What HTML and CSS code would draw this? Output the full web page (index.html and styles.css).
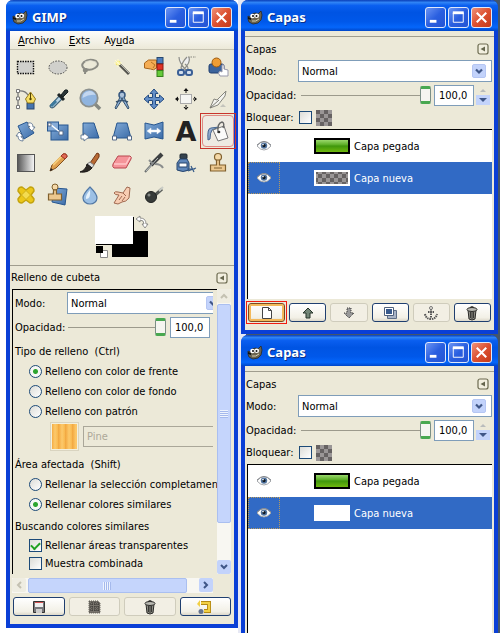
FILE: index.html
```
<!DOCTYPE html>
<html lang="es">
<head>
    <meta charset="UTF-8">
    <meta name="viewport" content="width=device-width, initial-scale=1.0">
    <title>GIMP</title>
    <link rel="stylesheet" href="styles.css">
</head>
<body>
    <!-- shared shapes -->
    <svg class="sprite" aria-hidden="true">
        <defs>
            <linearGradient id="blue" x1="0" y1="0" x2="1" y2="1">
                <stop offset="0" stop-color="#82abd8"/>
                <stop offset="1" stop-color="#3c6ca8"/>
            </linearGradient>
            <linearGradient id="bw" x1="0" x2="1">
                <stop offset="0" stop-color="#555"/>
                <stop offset="1" stop-color="#fafafa"/>
            </linearGradient>
            <linearGradient id="green" x1="0" x2="0" y1="0" y2="1">
                <stop offset="0" stop-color="#9ad86c"/>
                <stop offset=".4" stop-color="#5cae26"/>
                <stop offset=".5" stop-color="#3f960c"/>
                <stop offset="1" stop-color="#6fb80e"/>
            </linearGradient>
            <pattern id="checks" width="8" height="8" patternUnits="userSpaceOnUse">
                <rect width="8" height="8" fill="#9a9696"/>
                <path d="M0 0h4v4h-4zM4 4h4v4h-4z" fill="#666262"/>
            </pattern>
        </defs>
        <symbol id="wilber" viewBox="0 0 16 16">
            <path d="M1 7l2 1 2-3 4-1 2 1 3-3 1 4-1 5-3 3-5 1-4-2-1-3z" fill="#6b6450" stroke="#2b2a20" stroke-width=".8"/>
            <circle cx="5.500" cy="7" r="2.300" fill="#fff"/>
            <circle cx="9.800" cy="6.800" r="2.300" fill="#fff"/>
            <circle cx="6" cy="7" r="1" fill="#111"/>
            <circle cx="9.500" cy="7" r="1" fill="#111"/>
            <path d="M1 8l3 1v2l-3-1z" fill="#111"/>
            <path d="M5 12q4 1 7-2" stroke="#d5cfae" fill="none"/>
        </symbol>
        <symbol id="eye" viewBox="0 0 16 12">
            <path d="M1 6q7-9 14 0q-7 8-14 0z" fill="#fff" stroke="#a4a7ab"/>
            <circle cx="8" cy="5.600" r="3.200" fill="#51749f"/>
            <circle cx="8" cy="5.600" r="1.600" fill="#101820"/>
            <path d="M1 5q7-7 14 0" fill="none" stroke="#85888d"/>
            <circle cx="7" cy="4.600" r=".8" fill="#fff"/>
        </symbol>
        <symbol id="chevron" viewBox="0 0 14 14">
            <rect x=".5" y=".5" width="13" height="13" rx="1.500" fill="#c3d3fb" stroke="#b5c6f3"/>
            <path d="M4 5.500l3 3 3-3" fill="none" stroke="#3f5687" stroke-width="2.200"/>
        </symbol>
        <symbol id="detach" viewBox="0 0 12 12">
            <rect x="1" y="1" width="10" height="10" rx="2" fill="#f2efdf" stroke="#6c6b50" stroke-width="1.200"/>
            <path d="M8 3.500v5l-4.500-2.500z" fill="#66664e"/>
        </symbol>
        <symbol id="trash" viewBox="0 0 16 16">
            <path d="M4 5l1 9q3 2 6 0l1-9z" fill="#8d8d85" stroke="#2b2b28"/>
            <path d="M6.500 7v6M8 7v7M9.500 7v6" stroke="#3a3a37"/>
            <ellipse cx="8" cy="4.500" rx="5" ry="2" fill="#b9b9b2" stroke="#2b2b28"/>
            <path d="M6 2.500q2-2 4 0" fill="none" stroke="#2b2b28"/>
        </symbol>
    </svg>

    <main class="desktop">
        <section class="window toolbox">
            <header class="titlebar">
                <svg class="app-icon"><use href="#wilber"/></svg>
                <h1>GIMP</h1>
                <button class="win-btn" aria-label="Minimizar"><svg viewBox="0 0 20 20"><path d="M4 14h7" stroke="#fff" stroke-width="3"/></svg></button>
                <button class="win-btn" aria-label="Maximizar"><svg viewBox="0 0 20 20"><path d="M4.500 5v10h10.500v-10z" stroke="#fff" fill="none"/><path d="M4 5h11.500" stroke="#fff" stroke-width="3"/></svg></button>
                <button class="win-btn close" aria-label="Cerrar"><svg viewBox="0 0 20 20"><path d="M5 5l10 10M15 5l-10 10" stroke="#fff" stroke-width="2.200"/></svg></button>
            </header>
            <nav class="menubar">
                <a href="#"><u>A</u>rchivo</a>
                <a href="#"><u>E</u>xts</a>
                <a href="#">Ay<u>u</u>da</a>
            </nav>

            <div class="tools">
                <button class="tool" aria-label="Rectángulo"><svg viewBox="0 0 24 24"><rect x="3.500" y="6.500" width="16" height="12" fill="#d0d0cc" stroke="#111" stroke-width="1.400" stroke-dasharray="1.500 1"/></svg></button>
                <button class="tool" aria-label="Elipse"><svg viewBox="0 0 24 24"><ellipse cx="12" cy="12.500" rx="9" ry="6.500" fill="#d0d0cc" stroke="#444" stroke-dasharray="1.500 1.300"/></svg></button>
                <button class="tool" aria-label="Lazo"><svg viewBox="0 0 24 24"><path d="M7 14q-5-3-1-7q5-4 12-1q4 4-1 7q-5 3-9 1q-3 0-2 2q3 1 3-1q-2-1-2 4" fill="none" stroke="#8b8b83" stroke-width="2"/><path d="M7 7q5-3 11 0q2 3-2 5" fill="none" stroke="#deddd0" stroke-width=".8"/></svg></button>
                <button class="tool" aria-label="Varita"><svg viewBox="0 0 24 24"><path d="M9 9l10 10" stroke="#55554f" stroke-width="3"/><path d="M9.500 8.500l10 10" stroke="#b4b4ab" stroke-width="1"/><circle cx="8" cy="8" r="2.500" fill="#f5e86b"/><path d="M8 4v8M4 8h8M5 5l5 5" stroke="#fffbd0"/></svg></button>
                <button class="tool" aria-label="Por color"><svg viewBox="0 0 24 24"><path d="M2.500 8l4-3h8v8q-3 3-6 1l-6-1z" fill="#f4ad55" stroke="#a8651c"/><path d="M9 7l4 3-2 3" fill="none" stroke="#b87425"/><rect x="15" y="2.500" width="6" height="6" fill="#4d7dbd" stroke="#27486f"/><rect x="15" y="9" width="6" height="6" fill="#df3226" stroke="#8e1b12"/><rect x="15" y="15.500" width="6" height="6" fill="#65ca39" stroke="#34801a"/></svg></button>
                <button class="tool" aria-label="Tijeras"><svg viewBox="0 0 24 24"><path d="M5 2q0 6 7 13l2-1q0-3-3-5M15 2q2 6-6 13l-2-2q1-6 6-11" fill="#eee" stroke="#8d8d88" stroke-width="1.200"/><path d="M14 2h8" stroke="#86867d" stroke-dasharray="1.500 1"/><rect x="4" y="15" width="6" height="5" rx="2" fill="#d3deeb" stroke="#3a5f96" stroke-width="2"/><rect x="12" y="15" width="6" height="5" rx="2" fill="#d3deeb" stroke="#3a5f96" stroke-width="2"/></svg></button>
                <button class="tool" aria-label="Primer plano"><svg viewBox="0 0 24 24"><rect x="3" y="9" width="15" height="9" rx="2" fill="#3c649c" stroke="#203f70"/><circle cx="10.500" cy="7.500" r="4.500" fill="#ee9d35" stroke="#9d5b10"/><path d="M14 21q-3-3 0-5l2 1v-7q2-1 2 1v3l4 1v6z" fill="#fff" stroke="#99a"/></svg></button>

                <button class="tool" aria-label="Rutas"><svg viewBox="0 0 24 24"><path d="M4 4v16M4 4q7-1 10 4" stroke="#777" fill="none" stroke-width="1.300"/><path d="M2.500 2.500h3v3h-3zM2.500 10h3v3h-3zM2.500 18.500h3v3h-3z" fill="#fff" stroke="#777"/><rect x="13" y="16" width="7" height="6" fill="#4674af" stroke="#28466f"/><path d="M16.500 5l5 7-2 4h-6l-2-4z" fill="#f8df65" stroke="#92771c"/><path d="M16.500 6v7" stroke="#554400"/><circle cx="16.500" cy="12" r="1.200" fill="#554400"/></svg></button>
                <button class="tool" aria-label="Recoge-color"><svg viewBox="0 0 24 24"><path d="M14 8l3 3-9 9q-3 2-4-1z" fill="#b4d3e5" stroke="#44667b" stroke-width="1.200"/><path d="M5 19l5-5" stroke="#3c799d" stroke-width="3"/><path d="M12 7l6 6" stroke="#1d2425" stroke-width="3"/><path d="M15 8l4-5q3-1 3 2l-5 5z" fill="#2b3637" stroke="#172022"/></svg></button>
                <button class="tool" aria-label="Ampliación"><svg viewBox="0 0 24 24"><path d="M17 17l5 5" stroke="#858982" stroke-width="3.500"/><circle cx="11" cy="11" r="8.700" fill="#8fb4df" stroke="#8c918f" stroke-width="1.800"/><path d="M4.500 11q0-6 7-7q4 0 6 4q-6-1-13 3z" fill="#c3d7ef"/></svg></button>
                <button class="tool" aria-label="Medir"><svg viewBox="0 0 24 24"><path d="M12 3v4" stroke="#334" stroke-width="3"/><circle cx="12" cy="8" r="3" fill="#adc2da" stroke="#36577f" stroke-width="1.500"/><path d="M10 10l-5 11 1 1 7-11M14 10l5 11-1 1-7-11" fill="#8baed4" stroke="#38536f"/><path d="M6 15q6-3 12 0" fill="none" stroke="#38536f" stroke-width="1.500"/></svg></button>
                <button class="tool" aria-label="Mover"><svg viewBox="0 0 24 24"><path d="M12 2l4 4.500h-2.500v4h4V8l4.500 4-4.500 4v-2.500h-4v4H16l-4 4.500-4-4.500h2.500v-4h-4V16L2 12l4.500-4v2.500h4v-4H8z" fill="#648fc8" stroke="#234a80"/></svg></button>
                <button class="tool" aria-label="Alinear"><svg viewBox="0 0 24 24"><rect x="6.500" y="7.500" width="11" height="9" fill="#f5f5f2" stroke="#aaa"/><path d="M12 1l2.500 3h-5zM12 23l2.500-3h-5zM1 12l3-2.500v5zM23 12l-3-2.500v5zM11.500 3h1v3h-1zM11.500 18h1v3h-1zM3 11.500h2v1h-2zM19 11.500h2v1h-2z" fill="#111"/></svg></button>
                <button class="tool" aria-label="Recortar"><svg viewBox="0 0 24 24"><path d="M4 21l4-9 3 1 9-9-1 5-7 9z" fill="#f4f4f0" stroke="#85857d"/><path d="M4 21l9-8" stroke="#77776f"/><path d="M14 20h6l-3-3z" fill="#c4c4bc"/></svg></button>

                <button class="tool" aria-label="Rotar"><svg viewBox="0 0 24 24"><path d="M4 7l9-4 7 11-10 6z" fill="url(#blue)" stroke="#27568f"/><path d="M14 4q5-1 5 4h2l-3 4-4-4h2q0-1-2-1zM9 22q-5 0-5-5H2l3-4 4 4H7q0 2 2 2z" fill="#fff" stroke="#526989" stroke-width=".8"/></svg></button>
                <button class="tool" aria-label="Escalar"><svg viewBox="0 0 24 24"><rect x="5" y="6" width="17" height="15" fill="url(#blue)" stroke="#27568f"/><rect x="1.500" y="3" width="11" height="9" fill="#86abd7" stroke="#27568f"/><path d="M4 5l11 9" stroke="#fff" stroke-width="1.500"/><path d="M2 4h3v3h-3zM13 12h4v4h-4z" fill="#fff" stroke="#526989"/></svg></button>
                <button class="tool" aria-label="Inclinar"><svg viewBox="0 0 24 24"><path d="M5 4h11l5 15H5z" fill="url(#blue)" stroke="#27568f"/><path d="M3 16h3v-2l5 4-5 4v-2H3z" fill="#fff" stroke="#526989" stroke-width=".8"/></svg></button>
                <button class="tool" aria-label="Perspectiva"><svg viewBox="0 0 24 24"><path d="M7 4h10l4 15H3z" fill="url(#blue)" stroke="#27568f"/><path d="M2.500 17h4v4h-4zM17.500 17h4v4h-4z" fill="#fff" stroke="#526989"/></svg></button>
                <button class="tool" aria-label="Voltear"><svg viewBox="0 0 24 24"><path d="M3 4l9 2 9-3v17l-9-2-9 2z" fill="url(#blue)" stroke="#27568f"/><path d="M5 12l4-3v2h6V9l4 3-4 3v-2H9v2z" fill="#fff" stroke="#e8eef6" stroke-width=".5"/></svg></button>
                <button class="tool" aria-label="Texto"><svg viewBox="0 0 24 24"><text x="12" y="22" text-anchor="middle" class="text-tool">A</text></svg></button>
                <button class="tool marked" aria-label="Relleno de cubeta"><svg viewBox="0 0 24 24"><path d="M2 21q-1-12 3-12l8-1-7 3q-2 3-2 9z" fill="#93acd0" stroke="#46658f"/><path d="M7 11l11-4 4 12-10 3z" fill="#fbfbf9" stroke="#777"/><path d="M12 14q-1-10 4-11q3 1 1 6" fill="none" stroke="#666" stroke-width="1.400"/><circle cx="13" cy="13" r="1.300" fill="#333"/></svg></button>

                <button class="tool" aria-label="Mezcla"><svg viewBox="0 0 24 24"><rect x="3.500" y="3.500" width="17" height="17" fill="url(#bw)" stroke="#555"/></svg></button>
                <button class="tool" aria-label="Lápiz"><svg viewBox="0 0 24 24"><path d="M4 20l2-6L17 3q4-1 4 3L10 17z" fill="#dfa04e" stroke="#83511e"/><path d="M7 14l10-10" stroke="#f6cc79" stroke-width="2"/><path d="M17 3q4-1 4 3l-2 2-4-3z" fill="#e06a55" stroke="#9d3428"/><path d="M4 20l1-3 2 2z" fill="#222"/></svg></button>
                <button class="tool" aria-label="Pincel"><svg viewBox="0 0 24 24"><path d="M12 12l7-10q3 0 2 4l-6 9z" fill="#b86a34" stroke="#73391a"/><path d="M9 13l3-2 4 3-2 3z" fill="#ddd" stroke="#777"/><path d="M2 21q6-2 7-8l5 4q-4 5-12 4z" fill="#2d2925" stroke="#191715"/></svg></button>
                <button class="tool" aria-label="Goma"><svg viewBox="0 0 24 24"><path d="M3 13l5-8h12q2 1 1 3l-5 9H4q-2-1-1-4z" fill="#f5949a" stroke="#b9464e"/><path d="M4 13h12l4-7" fill="none" stroke="#ffc6c9" stroke-width="1.500"/></svg></button>
                <button class="tool" aria-label="Aerógrafo"><svg viewBox="0 0 24 24"><path d="M3 21l8-9" stroke="#6c7172" stroke-width="2"/><path d="M9 14L20 3" stroke="#3e4142" stroke-width="4"/><path d="M4 20L16 7" stroke="#b7bcbd"/><path d="M7 9l4 4M13 13q6 0 8 4" fill="none" stroke="#8a8d8d" stroke-width="2"/></svg></button>
                <button class="tool" aria-label="Tinta"><svg viewBox="0 0 24 24"><rect x="6" y="3" width="7" height="5" rx="1" fill="#34424c" stroke="#1e2830"/><path d="M6 8h7l2 4v7q-6 3-12 0v-7z" fill="#5f87ba" stroke="#27456d"/><rect x="5" y="12" width="8" height="4" fill="#fff" stroke="#27456d"/><path d="M14 20l8-3M17 15l3 6M13 18h8" stroke="#335887" stroke-width="1.200"/></svg></button>
                <button class="tool" aria-label="Clonar"><svg viewBox="0 0 24 24"><circle cx="12" cy="6" r="3.500" fill="#f4d8a7" stroke="#80602e" stroke-width="1.200"/><path d="M10.500 9h3v5h6v6h-15v-6h6z" fill="#ecc88f" stroke="#80602e" stroke-width="1.200"/><path d="M8 17h8" stroke="#80602e"/></svg></button>

                <button class="tool" aria-label="Sanear"><svg viewBox="0 0 24 24"><path d="M4 8q0-4 4-4l4 3 4-3q4 0 4 4l-3 4 3 4q0 4-4 4l-4-3-4 3q-4 0-4-4l3-4z" fill="#ecc719" stroke="#c3a30f" stroke-width="1.500" stroke-linejoin="round"/><path d="M7.500 12l4.500-4.500 4.500 4.500-4.500 4.500z" fill="#f4dc50" stroke="#d0b01a"/></svg></button>
                <button class="tool" aria-label="Clonar en perspectiva"><svg viewBox="0 0 24 24"><path d="M8 5l13 1-2 16-13-3z" fill="url(#blue)" stroke="#27568f"/><circle cx="9" cy="4" r="3" fill="#f4d8a7" stroke="#80602e"/><path d="M7.500 7h3v4h5v6h-13v-6h5z" fill="#ecc88f" stroke="#80602e" stroke-width="1.200"/></svg></button>
                <button class="tool" aria-label="Enfocar"><svg viewBox="0 0 24 24"><path d="M12 4q7 7 7 11a7 6 0 0 1-14 0q0-4 7-11z" fill="#9cc0e5" stroke="#5379a5" stroke-width="1.200"/><path d="M12 7q-5 6-4 9q5 0 4-9z" fill="#e5f1fb"/></svg></button>
                <button class="tool" aria-label="Tiznar"><svg viewBox="0 0 24 24"><path d="M4 20l5-8q-4 0-5-2 1-2 4-1l5 1 4-6 3 1-1 10q-3 4-7 4l-4 2z" fill="#f8cdb2" stroke="#a06950"/><path d="M13 10l3 3M9 17l3-4M12 18l3-4" stroke="#a06950"/></svg></button>
                <button class="tool" aria-label="Blanquear"><svg viewBox="0 0 24 24"><path d="M12 13l8-7" stroke="#555955" stroke-width="3"/><path d="M17 8l4-4" stroke="#c9cbc5" stroke-width="2"/><circle cx="9" cy="14" r="5.500" fill="#373b39" stroke="#202221"/><circle cx="7" cy="12" r="1.500" fill="#858985"/></svg></button>
            </div>

            <div class="colors">
                <button class="color-bg" aria-label="Color de fondo"></button>
                <button class="color-fg" aria-label="Color de frente"></button>
                <svg class="swap" viewBox="0 0 14 14"><path d="M1 4l4-3v2q6 0 6 6h2l-3 4-3-4h2q0-4-4-4v2z" fill="#fff" stroke="#777" stroke-width=".8"/></svg>
                <svg class="reset" viewBox="0 0 12 12"><path d="M4.500 4.500h7v7h-7z" fill="#fff" stroke="#888"/><path d="M0 0h7v7h-7z" fill="#000"/></svg>
            </div>

            <div class="dock-head">
                <h2>Relleno de cubeta</h2>
                <button class="detach" aria-label="Menú de pestaña"><svg><use href="#detach"/></svg></button>
            </div>

            <div class="options-area">
                <form class="options">
                    <div class="field-row">
                        <label for="fill-mode">Modo:</label>
                        <div class="combo">
                            <select id="fill-mode"><option>Normal</option></select>
                            <svg><use href="#chevron"/></svg>
                        </div>
                    </div>
                    <div class="field-row">
                        <label for="fill-opacity">Opacidad:</label>
                        <input type="range" id="fill-opacity" min="0" max="100" value="100">
                        <input type="text" class="spin" aria-label="Opacidad" value="100,0">
                    </div>
                    <fieldset>
                        <legend>Tipo de relleno&nbsp; (Ctrl)</legend>
                        <label class="choice"><input type="radio" name="fill" checked>Relleno con color de frente</label>
                        <label class="choice"><input type="radio" name="fill">Relleno con color de fondo</label>
                        <label class="choice"><input type="radio" name="fill">Relleno con patrón</label>
                        <div class="pattern">
                            <button type="button" class="pattern-btn" aria-label="Patrón"></button>
                            <input type="text" class="pattern-name" aria-label="Nombre del patrón" value="Pine" disabled>
                        </div>
                    </fieldset>
                    <fieldset>
                        <legend>Área afectada&nbsp; (Shift)</legend>
                        <label class="choice"><input type="radio" name="area">Rellenar la selección completament</label>
                        <label class="choice"><input type="radio" name="area" checked>Rellenar colores similares</label>
                    </fieldset>
                    <fieldset class="similar">
                        <legend>Buscando colores similares</legend>
                        <label class="choice"><input type="checkbox" checked>Rellenar áreas transparentes</label>
                        <label class="choice"><input type="checkbox">Muestra combinada</label>
                    </fieldset>
                    <div class="field-row threshold">
                        <input type="text" class="spin" aria-label="Umbral">
                    </div>
                </form>
                <div class="vscroll">
                    <span class="step off"><svg viewBox="0 0 14 14"><path d="M4 9l3-3 3 3"/></svg></span>
                    <span class="thumb"></span>
                    <span class="step"><svg viewBox="0 0 14 14"><path d="M4 5l3 3 3-3"/></svg></span>
                </div>
                <div class="hscroll">
                    <span class="step off"><svg viewBox="0 0 14 14"><path d="M9 4l-3 3 3 3"/></svg></span>
                    <span class="thumb"></span>
                    <span class="step"><svg viewBox="0 0 14 14"><path d="M5 4l3 3-3 3"/></svg></span>
                </div>
            </div>

            <div class="actions">
                <button aria-label="Guardar"><svg viewBox="0 0 16 16"><path d="M2.500 2.500h11v11h-11z" fill="#77777a" stroke="#333"/><path d="M4 3h8v5h-8z" fill="#eee"/><path d="M4 3h8v1h-8z" fill="#d65353"/><path d="M5 10h6v4h-6z" fill="#ccc"/></svg></button>
                <button disabled aria-label="Restaurar"><svg viewBox="0 0 16 16"><path d="M3 2h9l2 2v10H3z" fill="#77736c" stroke="#55524a" stroke-dasharray="1 1"/><path d="M4 5h9M4 8h9M4 11h9M6 3v10M9 3v10M12 3v10" stroke="#35332f" stroke-dasharray="1 1"/></svg></button>
                <button disabled aria-label="Borrar"><svg><use href="#trash"/></svg></button>
                <button aria-label="Reiniciar"><svg viewBox="0 0 16 16"><path d="M4 4h8v8H7" fill="none" stroke="#b58a14" stroke-width="4"/><path d="M4 4h8v8H7" fill="none" stroke="#f2d045" stroke-width="2.200"/><path d="M3 1v7l-3-3z" fill="#f2d045"/><circle cx="4" cy="12.500" r="2.500" fill="#68758f"/></svg></button>
            </div>
        </section>

        <div class="side">
            <section class="window layers">
                <header class="titlebar">
                    <svg class="app-icon"><use href="#wilber"/></svg>
                    <h1>Capas</h1>
                    <button class="win-btn" aria-label="Minimizar"><svg viewBox="0 0 20 20"><path d="M4 14h7" stroke="#fff" stroke-width="3"/></svg></button>
                    <button class="win-btn" aria-label="Maximizar"><svg viewBox="0 0 20 20"><path d="M4.500 5v10h10.500v-10z" stroke="#fff" fill="none"/><path d="M4 5h11.500" stroke="#fff" stroke-width="3"/></svg></button>
                    <button class="win-btn close" aria-label="Cerrar"><svg viewBox="0 0 20 20"><path d="M5 5l10 10M15 5l-10 10" stroke="#fff" stroke-width="2.200"/></svg></button>
                </header>
                <div class="dock-head">
                    <h2>Capas</h2>
                    <button class="detach" aria-label="Menú de pestaña"><svg><use href="#detach"/></svg></button>
                </div>
                <div class="field-row">
                    <label for="mode-1">Modo:</label>
                    <div class="combo">
                        <select id="mode-1"><option>Normal</option></select>
                        <svg><use href="#chevron"/></svg>
                    </div>
                </div>
                <div class="field-row">
                    <label for="opacity-1">Opacidad:</label>
                    <input type="range" id="opacity-1" min="0" max="100" value="100">
                    <input type="text" class="spin" aria-label="Opacidad" value="100,0">
                    <span class="spin-arrows"><svg viewBox="0 0 14 20"><path d="M4 7l3-3 3 3z" fill="#b9bcbc"/><rect y="10" width="14" height="10" fill="#c3d3fb"/><path d="M3 13h8l-4 4z" fill="#3f5687"/></svg></span>
                </div>
                <div class="field-row lock">
                    <label for="lock-1">Bloquear:</label>
                    <input type="checkbox" id="lock-1">
                    <svg class="alpha"><rect width="16" height="16" fill="url(#checks)"/></svg>
                </div>
                <ul class="layer-list">
                    <li>
                        <span class="visible"><svg><use href="#eye"/></svg></span>
                        <svg class="thumbnail" viewBox="0 0 36 16"><rect width="36" height="16"/><rect x="2" y="2" width="32" height="12" fill="url(#green)"/></svg>
                        Capa pegada
                    </li>
                    <li class="selected">
                        <span class="visible"><svg><use href="#eye"/></svg></span>
                        <svg class="thumbnail" viewBox="0 0 36 16"><rect width="36" height="16" fill="#fff"/><rect x="2" y="2" width="32" height="12" fill="url(#checks)"/></svg>
                        Capa nueva
                    </li>
                </ul>
                <div class="actions">
                    <button class="marked" aria-label="Capa nueva"><svg viewBox="0 0 16 16"><path d="M3.500 2.500h6l3 3v8h-9z" fill="#fff" stroke="#444"/><path d="M9.500 2.500v3h3" fill="none" stroke="#444"/></svg></button>
                    <button aria-label="Subir"><svg viewBox="0 0 16 16"><path d="M8 3l5 5h-3v5h-4v-5h-3z" fill="#728576" stroke="#26352a"/></svg></button>
                    <button disabled aria-label="Bajar"><svg viewBox="0 0 16 16"><path d="M8 13l5-5h-3v-5h-4v5h-3z" fill="#999" stroke="#333" stroke-dasharray="1 1"/></svg></button>
                    <button aria-label="Duplicar"><svg viewBox="0 0 16 16"><path d="M5.500 5.500h9v8h-9z" fill="#a9b4c6" stroke="#5e6e86"/><path d="M2.500 2.500h9v8h-9z" fill="#fff" stroke="#4e607c"/><path d="M4 4h6v5h-6z" fill="#385a8c"/></svg></button>
                    <button disabled aria-label="Anclar"><svg viewBox="0 0 16 16"><path d="M8 4v9M5 7h6M2 9q1 5 6 5t6-5" fill="none" stroke="#555" stroke-width="2" stroke-dasharray="1.500 .8"/><circle cx="8" cy="3" r="1.500" fill="none" stroke="#777"/></svg></button>
                    <button aria-label="Borrar"><svg><use href="#trash"/></svg></button>
                </div>
            </section>

            <section class="window layers">
                <header class="titlebar">
                    <svg class="app-icon"><use href="#wilber"/></svg>
                    <h1>Capas</h1>
                    <button class="win-btn" aria-label="Minimizar"><svg viewBox="0 0 20 20"><path d="M4 14h7" stroke="#fff" stroke-width="3"/></svg></button>
                    <button class="win-btn" aria-label="Maximizar"><svg viewBox="0 0 20 20"><path d="M4.500 5v10h10.500v-10z" stroke="#fff" fill="none"/><path d="M4 5h11.500" stroke="#fff" stroke-width="3"/></svg></button>
                    <button class="win-btn close" aria-label="Cerrar"><svg viewBox="0 0 20 20"><path d="M5 5l10 10M15 5l-10 10" stroke="#fff" stroke-width="2.200"/></svg></button>
                </header>
                <div class="dock-head">
                    <h2>Capas</h2>
                    <button class="detach" aria-label="Menú de pestaña"><svg><use href="#detach"/></svg></button>
                </div>
                <div class="field-row">
                    <label for="mode-2">Modo:</label>
                    <div class="combo">
                        <select id="mode-2"><option>Normal</option></select>
                        <svg><use href="#chevron"/></svg>
                    </div>
                </div>
                <div class="field-row">
                    <label for="opacity-2">Opacidad:</label>
                    <input type="range" id="opacity-2" min="0" max="100" value="100">
                    <input type="text" class="spin" aria-label="Opacidad" value="100,0">
                    <span class="spin-arrows"><svg viewBox="0 0 14 20"><path d="M4 7l3-3 3 3z" fill="#b9bcbc"/><rect y="10" width="14" height="10" fill="#c3d3fb"/><path d="M3 13h8l-4 4z" fill="#3f5687"/></svg></span>
                </div>
                <div class="field-row lock">
                    <label for="lock-2">Bloquear:</label>
                    <input type="checkbox" id="lock-2">
                    <svg class="alpha"><rect width="16" height="16" fill="url(#checks)"/></svg>
                </div>
                <ul class="layer-list">
                    <li>
                        <span class="visible"><svg><use href="#eye"/></svg></span>
                        <svg class="thumbnail" viewBox="0 0 36 16"><rect width="36" height="16"/><rect x="2" y="2" width="32" height="12" fill="url(#green)"/></svg>
                        Capa pegada
                    </li>
                    <li class="selected">
                        <span class="visible"><svg><use href="#eye"/></svg></span>
                        <svg class="thumbnail" viewBox="0 0 36 16"><rect width="36" height="16" fill="#fff"/></svg>
                        Capa nueva
                    </li>
                </ul>
            </section>
        </div>
    </main>
</body>
</html>
```

FILE: styles.css
```
* {
    box-sizing: border-box;
}

body {
    margin: 0;
    background: linear-gradient(90deg, #fff 50%, #44566a 50%);
    font-family: "DejaVu Sans Condensed", "Liberation Sans", sans-serif;
    font-size: 11px;
    color: #000;
}

button,
input,
select {
    font: inherit;
    color: inherit;
    margin: 0;
    padding: 0;
}

svg {
    display: block;
}

.sprite {
    position: absolute;
    width: 0;
    height: 0;
}

.desktop {
    display: flex;
    height: 100vh;
    overflow: hidden;
    padding: 0 2px 0 6px;
}

/* windows */
.window {
    display: flex;
    flex-direction: column;
    border: 4px solid #0a3fd6;
    border-top: 0;
    border-radius: 7px 7px 0 0;
    background: #ece9d8;
    min-width: 0;
}

.toolbox {
    flex: 1 1 232px;
    height: calc(100vh - 5px);
}

.side {
    flex: 1 1 260px;
    display: flex;
    flex-direction: column;
    gap: 1px;
    min-width: 0;
    padding-left: 3px;
    background: linear-gradient(90deg, #e6e8f4 8px, #44566a 8px);
}

.side .window + .window {
    flex: 1;
    border-bottom: 0;
}

.titlebar {
    display: flex;
    align-items: center;
    gap: 2px;
    height: 31px;
    margin: 0 -4px;
    padding: 3px 6px 0 6px;
    border-radius: 7px 7px 0 0;
    background: linear-gradient(#0a3fb8, #2f83f5 8%, #0a5ff0 18%, #0054e3 40%, #0058ea 70%, #0466fb 88%, #0046c8);
    color: #fff;
}

.titlebar h1 {
    flex: 1;
    margin: 0 0 0 2px;
    font-family: "Noto Sans", sans-serif;
    font-size: 13px;
    line-height: 20px;
    font-weight: bold;
    text-shadow: 1px 1px #0a2f88;
}

.app-icon {
    width: 16px;
    height: 16px;
}

.win-btn {
    width: 21px;
    height: 21px;
    border: 1px solid #dfe8fb;
    border-radius: 3px;
    background: linear-gradient(135deg, #6b94f3, #2a5fe0 50%, #2454d4);
}

.win-btn svg {
    width: 19px;
    height: 19px;
}

.win-btn.close {
    background: linear-gradient(135deg, #ee9278, #dc5030 50%, #c53a18);
}

.menubar {
    display: flex;
    gap: 14px;
    height: 19px;
    padding: 0 8px;
    line-height: 20px;
    background: linear-gradient(#fdfdfb, #ece9d8);
    border-bottom: 1px solid #c6c3b2;
}

.menubar a {
    color: #000;
    text-decoration: none;
}

/* tool grid */
.tools {
    display: grid;
    grid-template-columns: repeat(7, 1fr);
    padding-top: 1px;
}

.tool {
    position: relative;
    display: grid;
    place-items: center;
    height: 32px;
    border: 0;
    background: none;
}

.tool svg {
    width: 24px;
    height: 24px;
}

.text-tool {
    font-family: "DejaVu Sans", sans-serif;
    font-size: 27px;
    font-weight: bold;
    fill: #222;
}

.tool.marked {
    border: 1px solid #e08a84;
    border-radius: 4px;
    background: #eeeae2;
}

.tool.marked::after {
    content: "";
    position: absolute;
    inset: -3px;
    border: 1px solid #c8342c;
}

.colors {
    position: relative;
    align-self: center;
    width: 54px;
    height: 54px;
}

.colors > * {
    position: absolute;
    border: 0;
}

.color-fg {
    left: 0;
    top: 5px;
    width: 38px;
    height: 28px;
    background: #fff;
    box-shadow: 1px 1px #000;
}

.color-bg {
    left: 17px;
    top: 20px;
    width: 36px;
    height: 26px;
    background: #000;
}

.swap {
    right: 0;
    top: 4px;
    width: 14px;
    height: 14px;
}

.reset {
    left: 1px;
    top: 35px;
    width: 12px;
    height: 12px;
}

.dock-head {
    display: flex;
    align-items: center;
    justify-content: space-between;
    height: 24px;
    padding: 0 6px 0 1px;
    border-top: 1px solid #a09d8e;
}

.dock-head h2 {
    margin: 0;
    font-size: 11px;
    font-weight: normal;
}

.detach {
    border: 0;
    background: none;
}

.detach svg {
    width: 12px;
    height: 12px;
}

/* fields */
.field-row {
    display: flex;
    align-items: center;
    height: 24px;
}

.field-row label {
    flex: none;
    width: 52px;
    white-space: nowrap;
}

.combo {
    flex: 1;
    display: grid;
    align-items: center;
}

.combo > * {
    grid-area: 1 / 1;
}

.combo select {
    appearance: none;
    width: 100%;
    height: 22px;
    padding: 0 3px;
    border: 1px solid #7f9db9;
    border-radius: 0;
    background: #fff;
}

.combo svg {
    justify-self: end;
    width: 14px;
    height: 14px;
    margin-right: 6px;
    pointer-events: none;
}

input[type="range"] {
    appearance: none;
    flex: 1;
    min-width: 0;
    height: 20px;
    margin: 0 3px;
    background: linear-gradient(#9c9a8c, #9c9a8c) center / 100% 1px no-repeat;
}

input[type="range"]::-webkit-slider-thumb {
    appearance: none;
    width: 11px;
    height: 18px;
    border: 1px solid #7c8f86;
    border-top: 3px solid #48a850;
    border-bottom: 3px solid #48a850;
    border-radius: 2px;
    background: #f5f5f0;
}

.spin {
    width: 40px;
    height: 21px;
    padding: 0 4px;
    border: 1px solid #7f9db9;
    background: #fff;
}

.spin-arrows {
    flex: none;
    width: 14px;
    height: 20px;
    margin: 0 2px;
}

input[type="radio"],
input[type="checkbox"] {
    appearance: none;
    flex: none;
    width: 13px;
    height: 13px;
    border: 1px solid #1c4a78;
    background: linear-gradient(135deg, #dcdcd7, #fff);
}

input[type="radio"] {
    border-radius: 50%;
}

input[type="radio"]:checked {
    background: radial-gradient(circle, #2fa52f 2px, #f8f8f5 3px);
}

input[type="checkbox"]:checked {
    display: grid;
    place-items: center;
}

input[type="checkbox"]:checked::before {
    content: "";
    width: 7px;
    height: 4px;
    border: solid #21a121;
    border-width: 0 0 2px 2px;
    transform: rotate(-45deg);
}

/* tool options */
.options-area {
    flex: 1;
    min-height: 0;
    display: grid;
    grid-template: 1fr 15px / 1fr 14px;
    row-gap: 4px;
    padding: 0 3px 0 2px;
}

.options {
    min-width: 0;
    overflow: hidden;
    padding: 1px 4px 0 2px;
    border-top: 1px solid #000;
    border-left: 1px solid #000;
    white-space: nowrap;
}

/* the view is narrower than its content, so the arrow is cut */
.options .combo {
    overflow: hidden;
}

.options .combo select {
    width: calc(100% + 8px);
}

.options .combo svg {
    margin-right: -7px;
}

.options input[type="range"] {
    margin: 0 4px 0 1px;
}

.options .spin {
    margin-right: 3px;
}

fieldset {
    min-width: 0;
    margin: 4px 0 0;
    padding: 0;
    border: 0;
}

legend {
    padding: 0;
    line-height: 18px;
}

.choice {
    display: flex;
    align-items: center;
    gap: 3px;
    height: 20px;
    padding-left: 14px;
}

.similar .choice {
    height: 18px;
}

.pattern {
    display: flex;
    align-items: center;
    gap: 4px;
    height: 31px;
    padding-left: 35px;
}

.pattern-btn {
    flex: none;
    width: 29px;
    height: 29px;
    border: 2px solid #f3efdd;
    outline: 1px solid #d9d4c0;
    outline-offset: -1px;
    background: repeating-linear-gradient(90deg, #f5ad45, #fcc96c 3px, #f9b84d 6px, #ec9b3a 7px);
}

.pattern-name {
    flex: 1;
    min-width: 0;
    height: 21px;
    padding: 0 3px;
    border: 1px solid #aaa799;
    border-right: 0;
    background: #ece9d8;
    color: #aca899;
}

.threshold {
    justify-content: flex-end;
}

/* scrollbars */
.vscroll,
.hscroll {
    display: flex;
    gap: 1px;
    background: #f8f7f2;
}

.vscroll {
    flex-direction: column;
}

.hscroll {
    margin-right: 4px;
}

.step {
    flex: none;
    width: 14px;
    height: 14px;
    border-radius: 2px;
    background: #c3d3fb;
}

.step path {
    fill: none;
    stroke: #3f5687;
    stroke-width: 2;
}

.step.off {
    background: #efede2;
}

.step.off path {
    stroke: #c4c1b2;
}

.thumb {
    border: 1px solid #aabff0;
    border-radius: 2px;
    background: #c5d5fc;
    display: grid;
    place-items: center;
}

.thumb::before {
    content: "";
    width: 8px;
    height: 8px;
    background: repeating-linear-gradient(#eef4fe 0 1px, #a5b9ec 1px 2px);
}

.vscroll .thumb {
    height: 77%;
    margin-bottom: auto;
}

.hscroll .thumb {
    width: 79%;
    margin: 0 auto 0 1px;
}

.hscroll .thumb::before {
    background: repeating-linear-gradient(90deg, #eef4fe 0 1px, #a5b9ec 1px 2px);
}

.actions {
    display: flex;
    gap: 4px;
    padding: 4px 3px 8px;
}

.actions button {
    position: relative;
    flex: 1;
    display: grid;
    place-items: center;
    height: 19px;
    border: 1px solid #1f3f70;
    border-radius: 3px;
    background: linear-gradient(#fff, #f2f0e6 80%, #dcd8ca);
}

.actions button:disabled {
    border-color: #cfccbc;
    background: #f2efe4;
}

.actions svg {
    width: 16px;
    height: 16px;
}

.actions .marked {
    border-color: #7a4a20;
    box-shadow: inset 0 0 0 2px #f3b95a;
}

.actions .marked::after {
    content: "";
    position: absolute;
    inset: -3px;
    border: 1px solid #f01c10;
}

/* layers dock */
.layers .dock-head {
    height: 23px;
    margin-top: 5px;
    padding: 2px 5px 0 1px;
}

.layers .field-row {
    padding: 0 2px 0 1px;
}

.lock {
    gap: 4px;
}

.layers .field-row.lock {
    height: 21px;
}

.lock label {
    margin-right: -3px;
}

.alpha {
    width: 16px;
    height: 16px;
}

.layer-list {
    flex: 1;
    min-height: 170px;
    margin: 1px 2px 0;
    padding: 0;
    list-style: none;
    background: #fff;
    border-top: 1px solid #000;
    border-left: 1px solid #000;
}

.layer-list li {
    display: flex;
    align-items: center;
    gap: 4px;
    height: 32px;
}

.layer-list .selected {
    background: #316ac5;
    color: #fff;
}

.visible {
    display: grid;
    place-items: center;
    width: 32px;
    height: 32px;
    margin-right: 30px;
}

.selected .visible {
    border: 1px dotted #b89a5c;
}

.visible svg {
    width: 16px;
    height: 12px;
}

.thumbnail {
    width: 36px;
    height: 16px;
}
```
